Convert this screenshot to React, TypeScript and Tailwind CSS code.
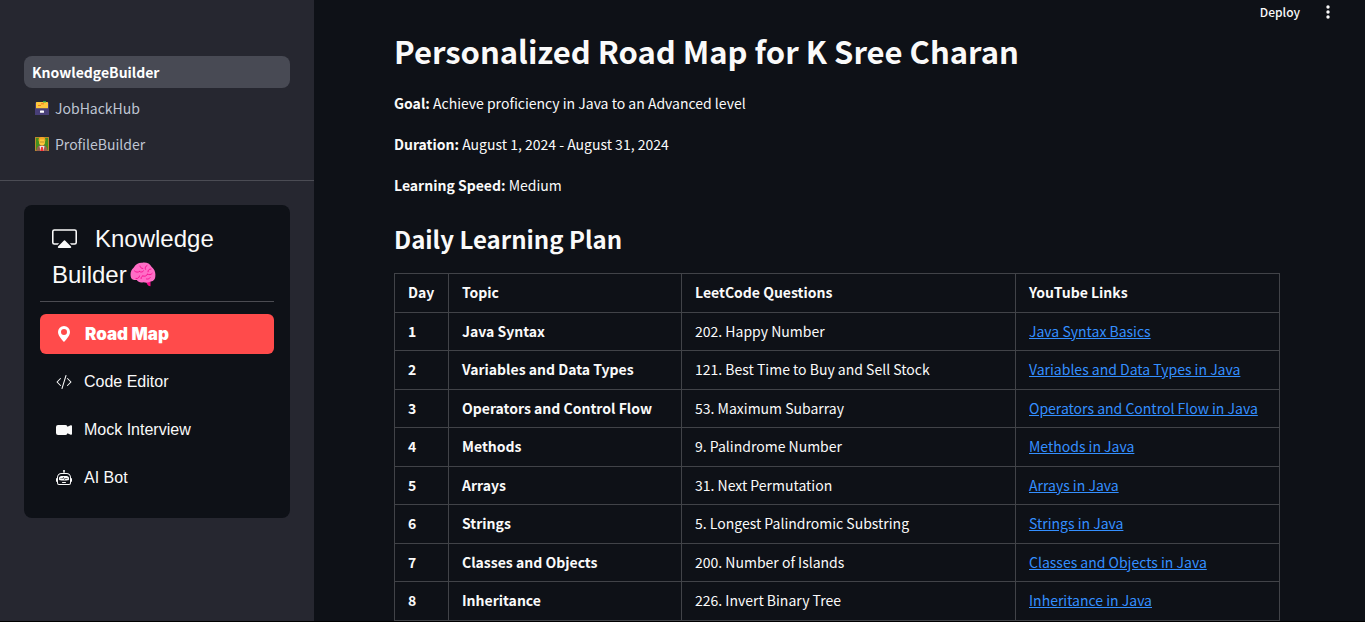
import type { ReactNode } from 'react';
import { BsCast, BsGeoAltFill, BsCodeSlash, BsCameraVideoFill, BsRobot } from 'react-icons/bs';

const rows = [
  ['1', 'Java Syntax', '202. Happy Number', 'Java Syntax Basics'],
  ['2', 'Variables and Data Types', '121. Best Time to Buy and Sell Stock', 'Variables and Data Types in Java'],
  ['3', 'Operators and Control Flow', '53. Maximum Subarray', 'Operators and Control Flow in Java'],
  ['4', 'Methods', '9. Palindrome Number', 'Methods in Java'],
  ['5', 'Arrays', '31. Next Permutation', 'Arrays in Java'],
  ['6', 'Strings', '5. Longest Palindromic Substring', 'Strings in Java'],
  ['7', 'Classes and Objects', '200. Number of Islands', 'Classes and Objects in Java'],
  ['8', 'Inheritance', '226. Invert Binary Tree', 'Inheritance in Java'],
];

function FileBoxIcon() {
  return (
    <svg viewBox="0 0 14 14" className="h-[14px] w-[14px]" aria-hidden="true">
      <rect x="0" y="1.5" width="14" height="12.5" rx="0.8" fill="#433b6b" />
      <rect x="1" y="1" width="12" height="6.6" rx="0.5" fill="#ffc83d" />
      <rect x="8" y="0" width="3" height="1.4" fill="#2f9e44" />
      <path d="M3 4.500h3M6 2.800h3" stroke="#f47b20" strokeWidth="1" />
      <rect x="0" y="7.6" width="14" height="6.4" rx="0.6" fill="#483f78" />
      <rect x="5" y="9.6" width="4" height="2.2" rx="0.5" fill="#fff" />
    </svg>
  );
}

function TeacherIcon() {
  return (
    <svg viewBox="0 0 14 14" className="h-[14px] w-[14px]" aria-hidden="true">
      <rect width="14" height="14" fill="#b98a2b" />
      <rect x="1" y="1" width="12" height="12" fill="#43901f" />
      <path d="M1.500 14c0-4 2-6 5.500-6s5.500 2 5.500 6z" fill="#96604f" />
      <ellipse cx="7" cy="4.800" rx="3" ry="3.800" fill="#ffc83d" />
      <path d="M3.700 4.500C3.200 1 4.500 0 7 0s3.800 1 3.300 4.500L9 2.500H5z" fill="#f5a523" />
      <path d="M4.600 5h4.800" stroke="#a87a20" strokeWidth="0.700" />
      <path d="M4.500 9h5L8.500 14h-3z" fill="#e8dfe4" />
      <path d="M6.200 10h1.600l.8 4H5.400z" fill="#f8312f" />
    </svg>
  );
}

function BrainIcon() {
  return (
    <svg viewBox="0 0 26 25" className="ml-[3px] inline-block h-[25px] w-[26px] align-[-4px]" aria-hidden="true">
      <path d="M16 18l4.500 1.500v4.800c-2-.2-3.500-1.500-4-3.500z" fill="#f70a8d" />
      <path d="M1.200 16C-.3 12 .8 8 3.800 5.500 5.500 2 9 .3 12.500.7c4-.6 7.500 1 9 4 3 2.300 4.300 6 3.800 9.300.2 3-1.500 5-4.300 5.500-2.500 1.300-5 1.400-7.500.7-3 .6-5.500 0-6.700-2.200-2.400.4-4.600-.2-5.600-2z" fill="#ff6dc6" />
      <path d="M6 16.500c2 .3 3.200-.8 3.500-2.500M4.500 9c1.500 1.500 3.500 1.500 5 .5M9.500 9.500c1.500 1 3 .7 4-.6M10 4c.2 1.500 1.200 2.400 2.800 2.500M17 3.500c-1.700.8-2.200 2.200-1.500 3.800M21 7c-2 0-3 1-3 2.800M13 14c2 .7 3.700-.1 4.500-1.800M17.500 12.200c1.700.9 3.500.6 4.700-.8M16.500 17c1.500.3 2.900-.2 3.700-1.400M12.500 14c-1 .6-1.500 1.500-1.400 2.600" fill="none" stroke="#f70a8d" strokeWidth="0.900" strokeLinecap="round" />
    </svg>
  );
}

function MenuLink({ icon, children }: { icon: ReactNode; children: ReactNode }) {
  return (
    <a href="#" className="flex h-10 items-center gap-3 rounded-md px-4 text-base">
      {icon}
      <span>{children}</span>
    </a>
  );
}

function Fact({ label, children }: { label: string; children: ReactNode }) {
  return (
    <p className="leading-[26px]">
      <strong>{label}</strong> {children}
    </p>
  );
}

export default function App() {
  return (
    <div className="flex h-screen overflow-hidden border-b border-black bg-[#0e1117] font-['Noto_Sans_CJK_JP',sans-serif] text-sm text-[#fafafa]">
      <aside className="w-[314px] shrink-0 bg-[#262730]">
        <nav className="flex flex-col gap-1 border-b border-[#4b4c54] px-6 pt-14 pb-5 text-[#bfc5d3]">
          <a href="#" className="flex h-8 items-center rounded-lg bg-[#484a54] px-2 font-bold text-white">KnowledgeBuilder</a>
          <a href="#" className="flex h-8 items-center gap-1.5 pl-[11px]">
            <FileBoxIcon />
            JobHackHub
          </a>
          <a href="#" className="flex h-8 items-center gap-1.5 pl-[11px]">
            <TeacherIcon />
            ProfileBuilder
          </a>
        </nav>
        <div className="mx-6 mt-6 rounded-lg bg-[#0e1117] p-4 pb-5 font-['Liberation_Sans',sans-serif]">
          <h2 className="border-b border-[#4b4c52] px-3 pb-2 text-2xl leading-9">
            <BsCast className="mr-[18px] inline-block h-[25px] w-[25px] align-[-4px]" />
            Knowledge Builder
            <BrainIcon />
          </h2>
          <nav className="mt-3 flex flex-col gap-2">
            <a href="#" className="flex h-10 items-center gap-[13px] rounded-md bg-[#ff4b4b] px-4 font-['Inter',sans-serif] text-[17px] font-black text-white">
              <BsGeoAltFill className="h-4 w-4" />
              Road Map
            </a>
            <MenuLink icon={<BsCodeSlash className="h-4 w-4" />}>Code Editor</MenuLink>
            <MenuLink icon={<BsCameraVideoFill className="h-4 w-4" />}>Mock Interview</MenuLink>
            <MenuLink icon={<BsRobot className="h-4 w-4" />}>AI Bot</MenuLink>
          </nav>
        </div>
      </aside>

      <div className="flex min-w-0 flex-1 flex-col">
        <header className="flex h-6 shrink-0 items-center justify-end gap-5 pr-[29px]">
          <button type="button" className="text-xs font-medium">Deploy</button>
          <button type="button" aria-label="Main menu" className="h-4 w-4">
            <svg viewBox="0 0 16 16" className="h-4 w-4" fill="currentColor" aria-hidden="true">
              <circle cx="8" cy="3" r="1.700" />
              <circle cx="8" cy="8" r="1.700" />
              <circle cx="8" cy="13" r="1.700" />
            </svg>
          </button>
        </header>
        <main className="px-20">
          <h1 className="text-[31px] leading-[54px] font-bold">Personalized Road Map for K Sree Charan</h1>
          <div className="mt-3 flex flex-col gap-[15px]">
            <Fact label="Goal:">Achieve proficiency in Java to an Advanced level</Fact>
            <Fact label="Duration:">August 1, 2024 - August 31, 2024</Fact>
            <Fact label="Learning Speed:">Medium</Fact>
          </div>
          <h2 className="mt-[21px] text-2xl leading-10 font-bold">Daily Learning Plan</h2>
          <table className="mt-[14px] w-[886px] table-fixed border-collapse text-left [&_td]:border [&_td]:border-[#414348] [&_td]:px-[13px] [&_td]:pb-0.5 [&_th]:border [&_th]:border-[#414348] [&_th]:px-[13px] [&_th]:pb-0.5">
            <colgroup>
              <col className="w-[54px]" />
              <col className="w-[233px]" />
              <col className="w-[334px]" />
              <col />
            </colgroup>
            <thead>
              <tr className="h-[39px]">
                <th>Day</th>
                <th>Topic</th>
                <th>LeetCode Questions</th>
                <th>YouTube Links</th>
              </tr>
            </thead>
            <tbody>
              {rows.map(([day, topic, question, link]) => (
                <tr key={day} className="odd:h-[38px] even:h-[39px]">
                  <td className="font-bold">{day}</td>
                  <td className="font-bold">{topic}</td>
                  <td>{question}</td>
                  <td>
                    <a href="#" className="text-[#348fff] underline">{link}</a>
                  </td>
                </tr>
              ))}
            </tbody>
          </table>
        </main>
      </div>
    </div>
  );
}
